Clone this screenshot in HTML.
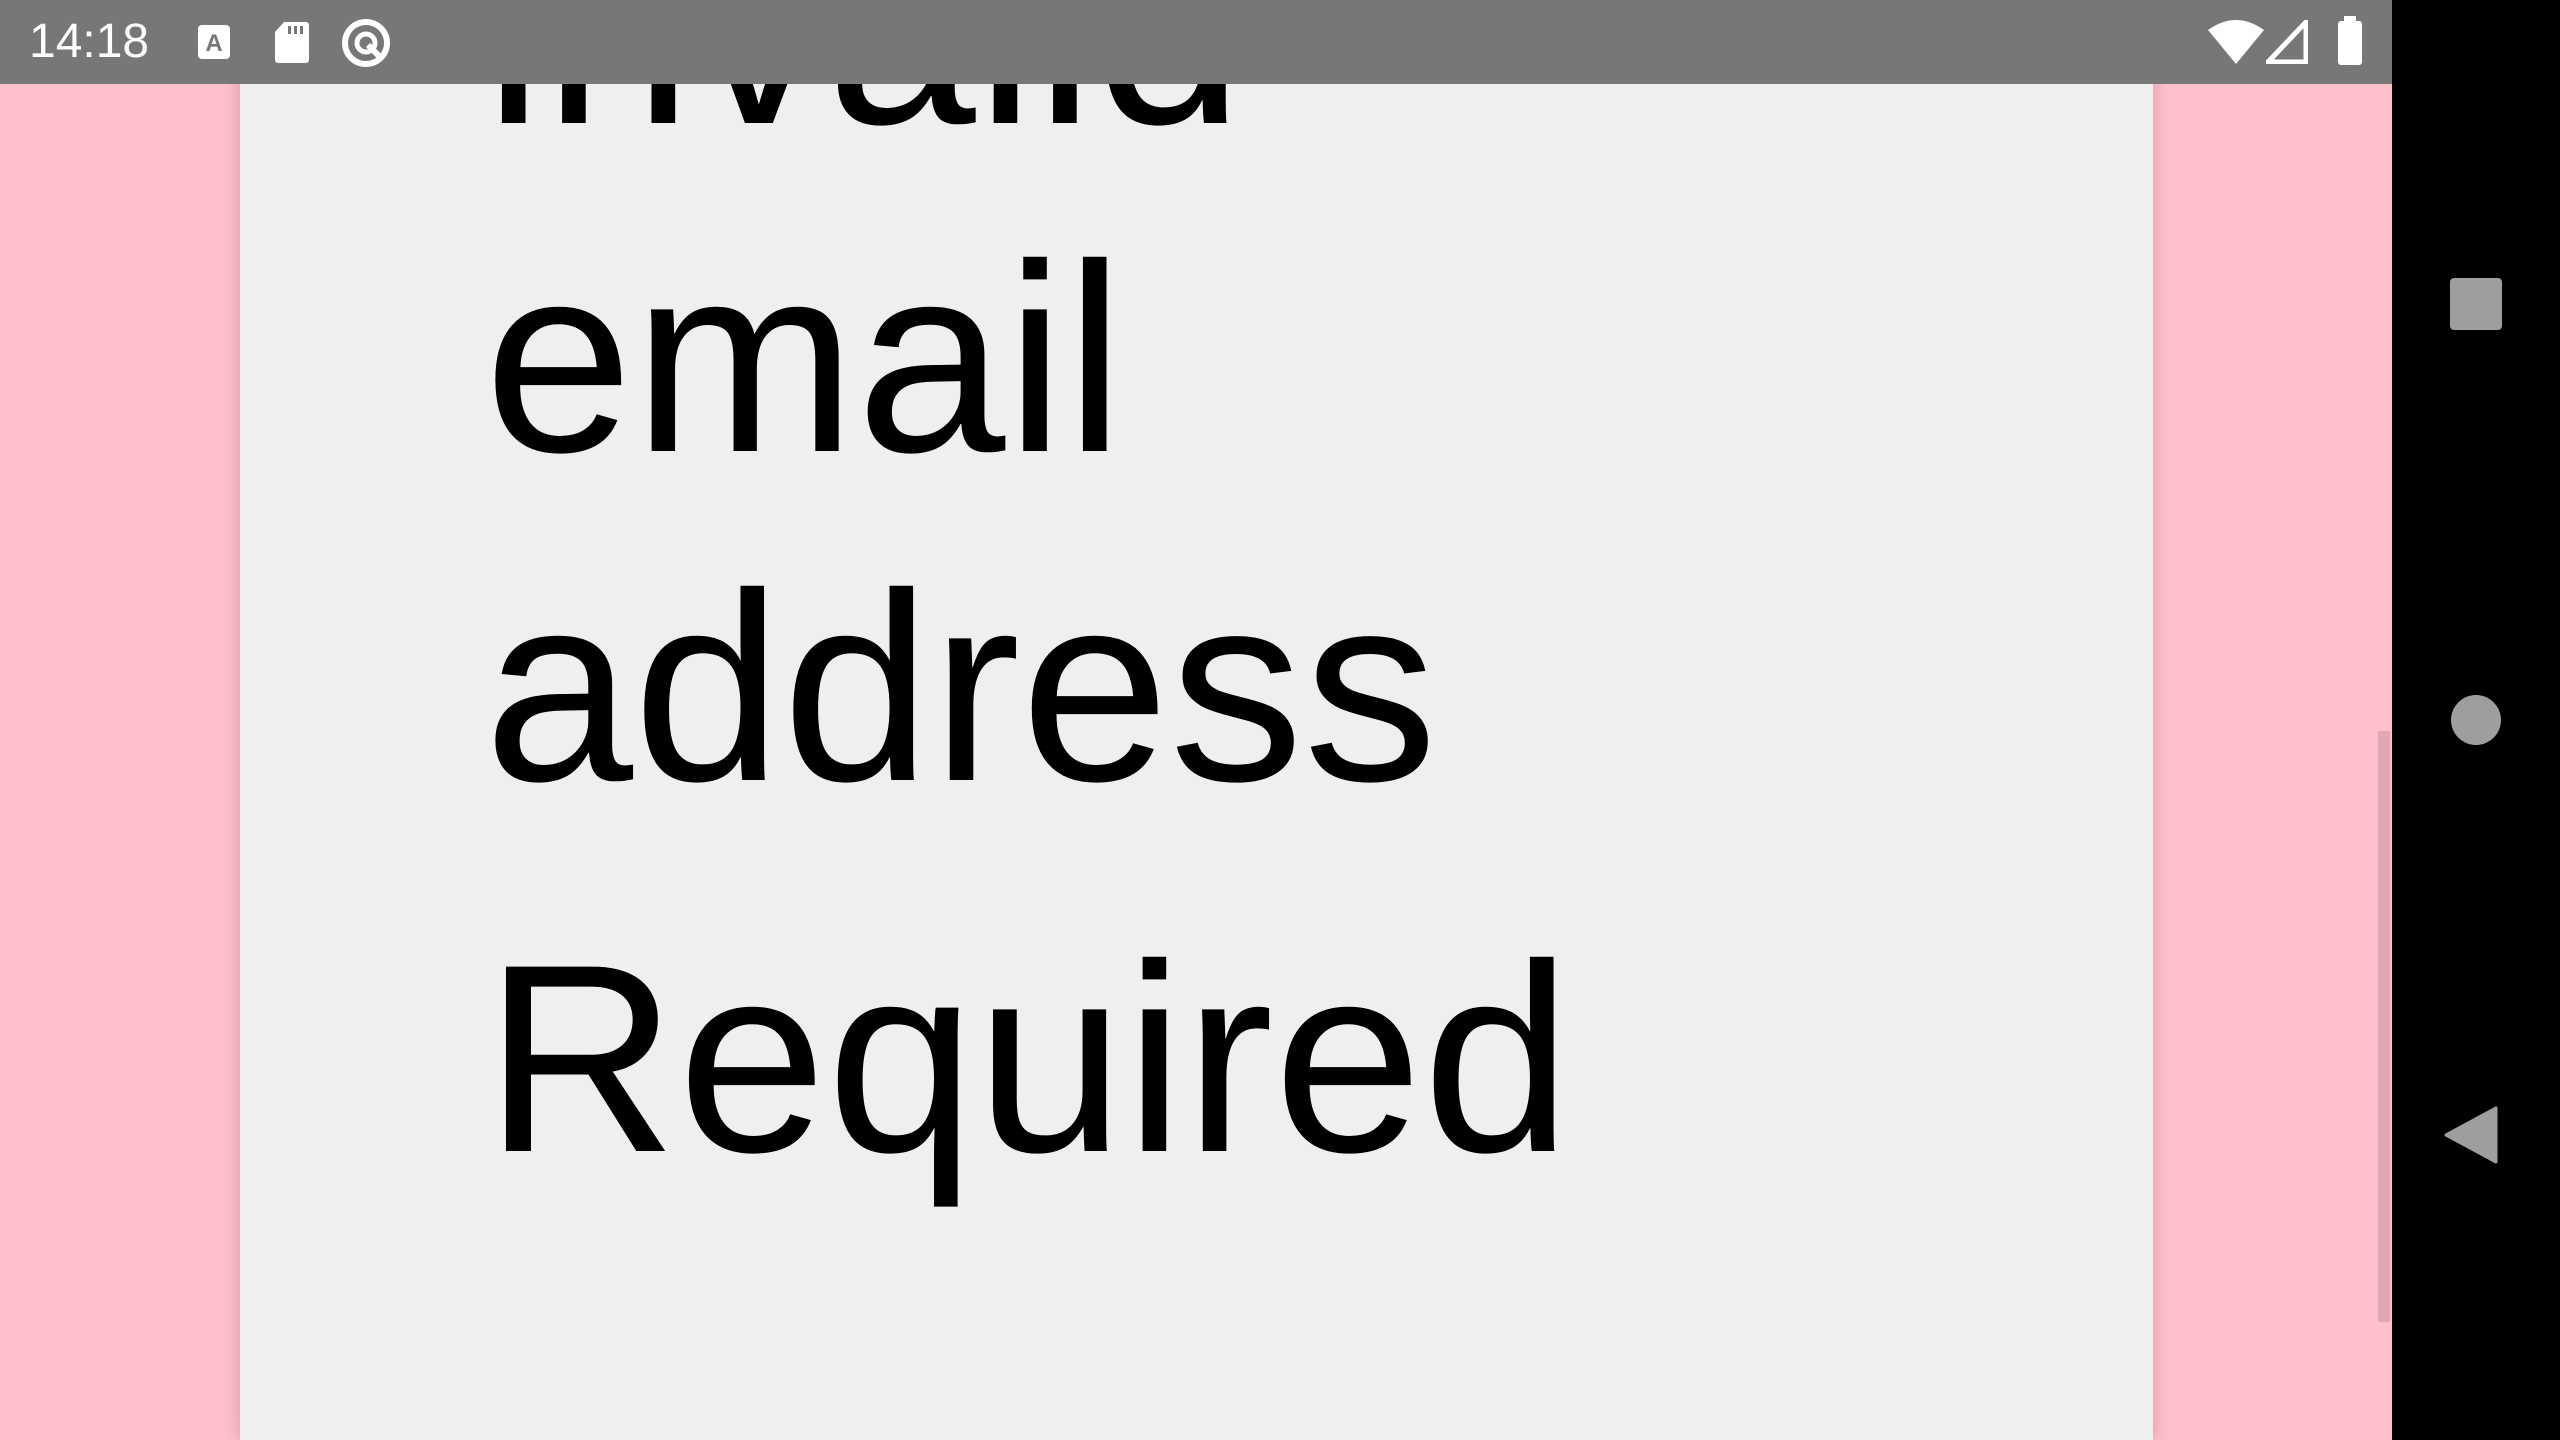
<!DOCTYPE html>
<html><head><meta charset="utf-8"><style>
html,body{margin:0;padding:0;width:2560px;height:1440px;overflow:hidden;background:#ffc0cb;font-family:"Liberation Sans",sans-serif;}
.card{position:absolute;left:240px;top:0;width:1913px;height:1440px;background:#efefef;box-shadow:0 0 18px rgba(0,0,0,0.18);}
.w{position:absolute;left:484px;font-size:268px;line-height:272px;color:#000;white-space:nowrap;}
.status{position:absolute;left:0;top:0;width:2392px;height:84px;background:#777;}
.nav{position:absolute;left:2392px;top:0;width:168px;height:1440px;background:#000;}
.time{position:absolute;left:29px;top:15px;font-size:48px;color:#fff;line-height:54px;}
.scroll{position:absolute;left:2378px;top:731px;width:12px;height:591px;background:rgba(0,0,0,0.12);}
</style></head><body>
<div class="card"></div>
<div class="w" style="top:-106px">invalid</div>
<div class="w" style="top:222px">email</div>
<div class="w" style="top:551px">address</div>
<div class="w" style="top:922px">Required</div>
<div class="scroll"></div>
<div class="status">
<div class="time">14:18</div>
<svg style="position:absolute;left:196px;top:23px" width="36" height="38" viewBox="0 0 36 38"><rect x="2" y="2" width="32" height="34" rx="4" fill="#fff"/><text x="18" y="28" font-size="24" font-family="Liberation Sans" font-weight="bold" fill="#777" text-anchor="middle">A</text></svg>
<svg style="position:absolute;left:274px;top:20px" width="36" height="44" viewBox="0 0 36 44"><path d="M10 2H32a3 3 0 0 1 3 3V40a3 3 0 0 1-3 3H4a3 3 0 0 1-3-3V12Z" fill="#fff"/><rect x="14" y="6" width="3" height="8" fill="#777"/><rect x="20" y="6" width="3" height="8" fill="#777"/><rect x="26" y="6" width="3" height="8" fill="#777"/></svg>
<svg style="position:absolute;left:340px;top:17px" width="52" height="52" viewBox="0 0 52 52"><circle cx="26" cy="26" r="21" fill="none" stroke="#fff" stroke-width="6"/><circle cx="26" cy="26" r="9" fill="none" stroke="#fff" stroke-width="5"/><path d="M28 28L40 40" stroke="#fff" stroke-width="6"/></svg>
<svg style="position:absolute;left:2208px;top:20px" width="56" height="44" viewBox="0 0 56 44"><path d="M0 10Q28 -10 56 10L28 44Z" fill="#fff"/></svg>
<svg style="position:absolute;left:2266px;top:20px" width="42" height="44" viewBox="0 0 42 44"><path d="M40 2V42H2Z" fill="none" stroke="#fff" stroke-width="5"/></svg>
<svg style="position:absolute;left:2336px;top:16px" width="28" height="50" viewBox="0 0 28 50"><rect x="8" y="0" width="12" height="6" fill="#fff"/><rect x="2" y="5" width="24" height="44" rx="3" fill="#fff"/></svg>
</div>
<div class="nav">
<div style="position:absolute;left:58px;top:278px;width:52px;height:52px;background:#9e9e9e;border-radius:4px"></div>
<div style="position:absolute;left:59px;top:695px;width:50px;height:50px;background:#9e9e9e;border-radius:50%"></div>
<svg style="position:absolute;left:52px;top:1106px" width="56" height="58" viewBox="0 0 56 58"><path d="M52 2V56L2 29Z" fill="#9e9e9e" stroke="#9e9e9e" stroke-width="3" stroke-linejoin="round"/></svg>
</div>
</body></html>
